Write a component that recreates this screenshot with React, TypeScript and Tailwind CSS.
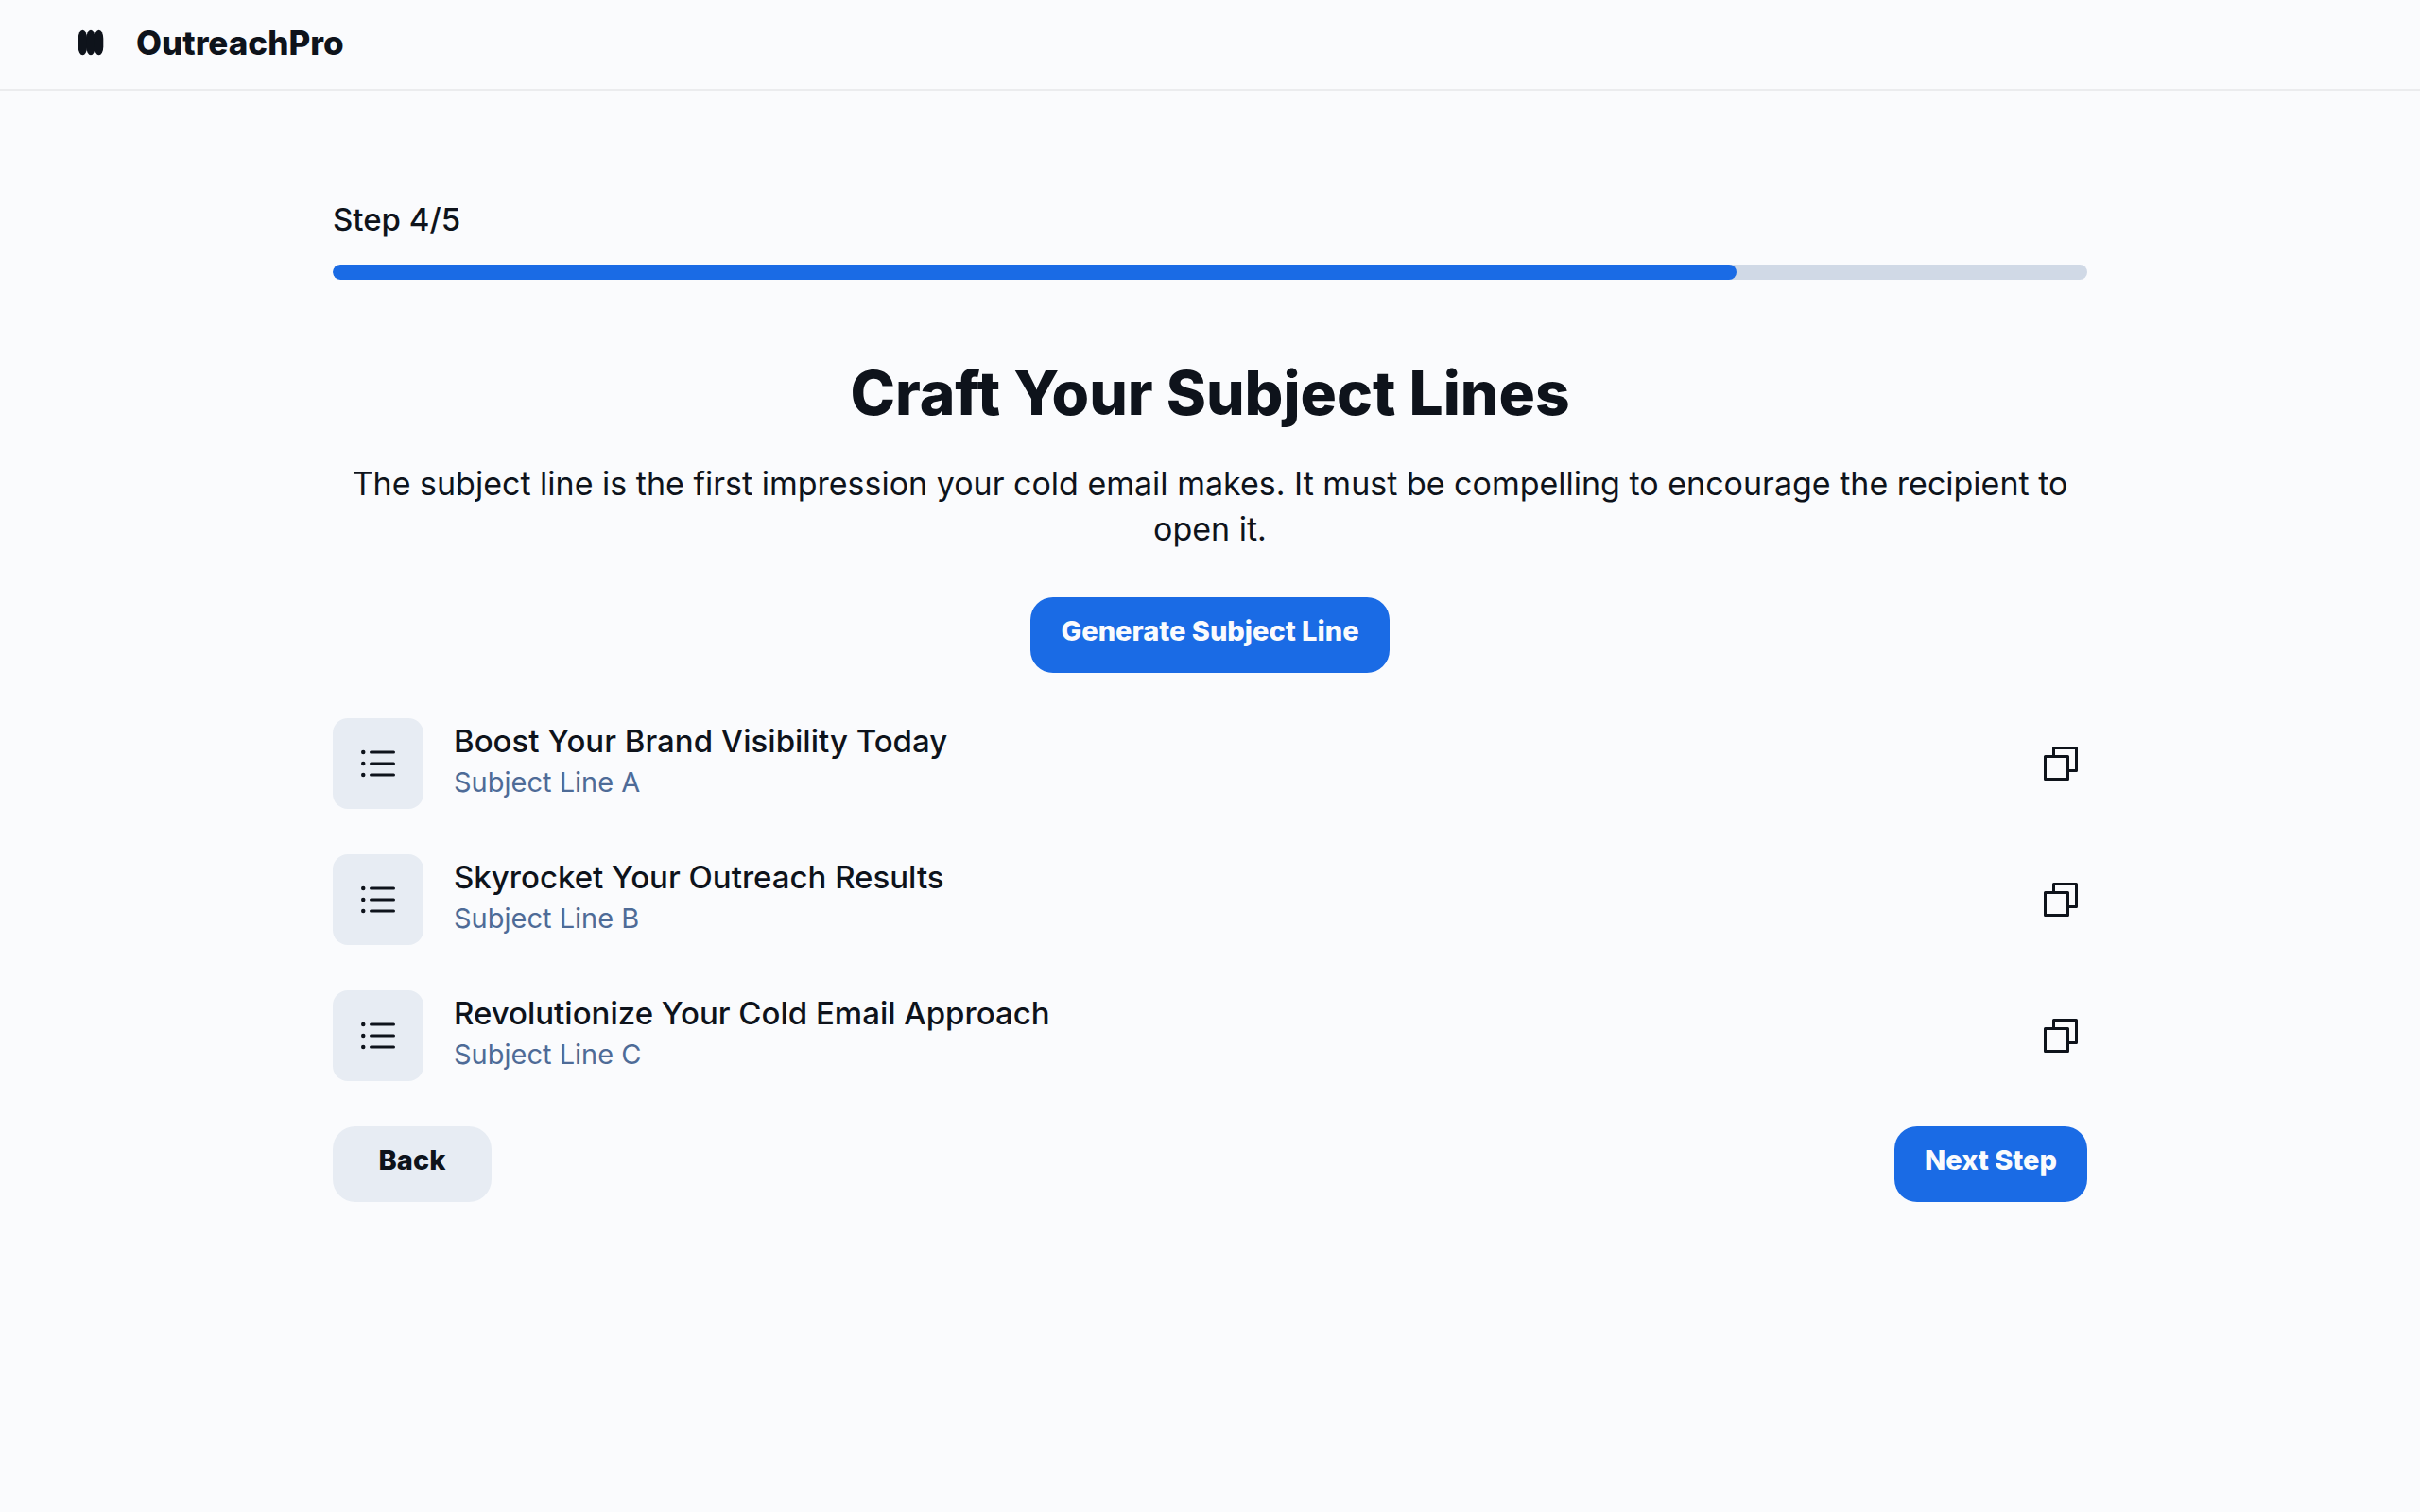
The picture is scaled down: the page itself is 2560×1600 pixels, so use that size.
const subjectLines = [
  { title: "Boost Your Brand Visibility Today", label: "Subject Line A" },
  { title: "Skyrocket Your Outreach Results", label: "Subject Line B" },
  { title: "Revolutionize Your Cold Email Approach", label: "Subject Line C" },
];

function Logo() {
  return (
    <svg viewBox="0 0 32 32" className="size-8" fill="currentColor" aria-hidden="true">
      <rect x="2.7" y="2.7" width="9.4" height="26.6" rx="4.7" ry="9" />
      <rect x="11.3" y="2.7" width="9.4" height="26.6" rx="4.7" ry="9" />
      <rect x="19.9" y="2.7" width="9.4" height="26.6" rx="4.7" ry="9" />
    </svg>
  );
}

function ListIcon() {
  return (
    <svg viewBox="0 0 256 256" className="size-12" fill="currentColor" aria-hidden="true">
      <path d="M80,64a8,8,0,0,1,8-8H216a8,8,0,0,1,0,16H88A8,8,0,0,1,80,64Zm136,56H88a8,8,0,0,0,0,16H216a8,8,0,0,0,0-16Zm0,64H88a8,8,0,0,0,0,16H216a8,8,0,0,0,0-16ZM44,52A12,12,0,1,0,56,64,12,12,0,0,0,44,52Zm0,64a12,12,0,1,0,12,12A12,12,0,0,0,44,116Zm0,64a12,12,0,1,0,12,12A12,12,0,0,0,44,180Z" />
    </svg>
  );
}

function CopyIcon() {
  return (
    <svg viewBox="0 0 256 256" className="size-12" fill="currentColor" aria-hidden="true">
      <path d="M216,32H88a8,8,0,0,0-8,8V80H40a8,8,0,0,0-8,8V216a8,8,0,0,0,8,8H168a8,8,0,0,0,8-8V176h40a8,8,0,0,0,8-8V40A8,8,0,0,0,216,32ZM160,208H48V96H160Zm48-48H176V88a8,8,0,0,0-8-8H96V48H208Z" />
    </svg>
  );
}

export default function App() {
  return (
    <div className="min-h-screen bg-[#fafbfd] font-['Inter',sans-serif] text-[#0e131b]">
      <header className="flex h-24 items-center gap-8 border-b-2 border-[#ebecee] px-20 pb-1">
        <Logo />
        <span className="text-[35px] leading-10 font-extrabold">OutreachPro</span>
      </header>

      <main className="mx-auto max-w-[1920px] px-8 pt-28">
        <label htmlFor="progress" className="block text-[33px] leading-12 font-medium">
          Step 4/5
        </label>
        <progress
          id="progress"
          value={4}
          max={5}
          className="mt-6 block h-4 w-full appearance-none overflow-hidden rounded-full bg-[#d0d9e6] [&::-webkit-progress-bar]:bg-[#d0d9e6] [&::-webkit-progress-value]:rounded-full [&::-webkit-progress-value]:bg-[#1a6be5]"
        />

        <h1 className="mt-20 text-center text-[64px] leading-20 font-extrabold">Craft Your Subject Lines</h1>
        <p className="mt-8 text-center text-[34px] leading-12">
          The subject line is the first impression your cold email makes. It must be compelling to encourage the
          recipient to open it.
        </p>

        <div className="mt-12 flex justify-center">
          <button className="h-20 rounded-3xl bg-[#1a6be5] px-8 pb-2 text-[29px] font-extrabold text-[#fafbfd]">
            Generate Subject Line
          </button>
        </div>

        <ul className="mt-12 flex flex-col gap-12">
          {subjectLines.map((line) => (
            <li key={line.label} className="flex items-center gap-8">
              <div className="flex size-24 shrink-0 items-center justify-center rounded-2xl bg-[#e7ecf3]">
                <ListIcon />
              </div>
              <div className="flex-1 pb-2">
                <p className="text-[33px] leading-12 font-medium">{line.title}</p>
                <p className="text-[29px] leading-10 text-[#4e6b97]">{line.label}</p>
              </div>
              <button aria-label={`Copy ${line.label}`} className="flex size-14 items-center justify-center">
                <CopyIcon />
              </button>
            </li>
          ))}
        </ul>

        <div className="mt-12 flex justify-between">
          <button className="h-20 min-w-42 rounded-3xl bg-[#e7ecf3] px-8 pb-2 text-[29px] font-extrabold">Back</button>
          <button className="h-20 rounded-3xl bg-[#1a6be5] px-8 pb-2 text-[29px] font-extrabold text-[#fafbfd]">
            Next Step
          </button>
        </div>
      </main>
    </div>
  );
}
